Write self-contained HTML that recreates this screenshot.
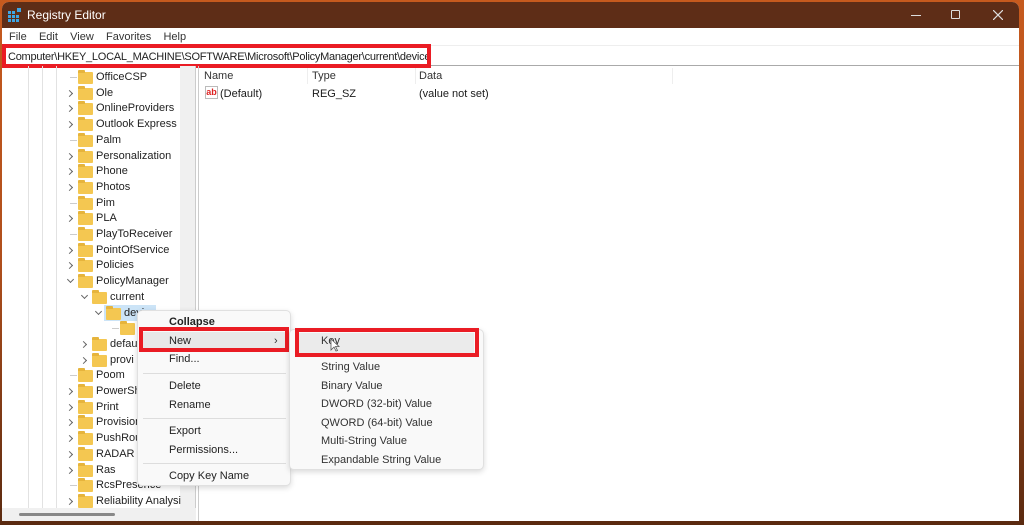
<!DOCTYPE html>
<html><head><meta charset="utf-8"><style>
*{margin:0;padding:0;box-sizing:border-box}
body{width:1024px;height:525px;overflow:hidden;position:relative;background:linear-gradient(180deg,#c65a1e 0%,#b04f1c 50%,#5a2a10 100%);font-family:"Liberation Sans",sans-serif;font-size:11px;color:#1a1a1a}
.a{position:absolute;white-space:nowrap}
#win{position:absolute;left:2px;top:2px;width:1017px;height:519px;background:#fff;border-radius:7px 7px 0 0;overflow:hidden}
.fold{position:absolute;width:15px;height:12px;background:#f4c751;border-radius:1px}
.fold:before{content:"";position:absolute;left:0;top:-2px;width:7px;height:3px;background:#e6b43c;border-radius:1px 1px 0 0}
.chev{position:absolute;width:5px;height:5px;border-right:1px solid #666;border-bottom:1px solid #666;transform:rotate(-45deg)}
.chev.d{transform:rotate(45deg)}
.t{position:absolute;color:#222;font-size:11px}
.mi{position:absolute;left:31px;font-size:11px;color:#222}
.si{position:absolute;left:31px;font-size:11px;color:#333}
</style></head><body>
<div id="win">
 <div class="a" style="left:0;top:0;width:1017px;height:26px;background:#5e2d17"></div>
 <svg class="a" style="left:6px;top:5px" width="15" height="15"><rect x="0" y="4" width="3" height="3" fill="#3ea6e6"/><rect x="4" y="4" width="3" height="3" fill="#3ea6e6"/><rect x="0" y="8" width="3" height="3" fill="#3ea6e6"/><rect x="4" y="8" width="3" height="3" fill="#3ea6e6"/><rect x="8" y="8" width="3" height="3" fill="#3ea6e6"/><rect x="0" y="12" width="3" height="3" fill="#3ea6e6"/><rect x="4" y="12" width="3" height="3" fill="#3ea6e6"/><rect x="8" y="12" width="3" height="3" fill="#3ea6e6"/><rect x="9" y="1" width="4" height="4" fill="#3ea6e6"/></svg>
 <div class="a" style="left:25px;top:6px;color:#fff;font-size:12px">Registry Editor</div>
 <div class="a" style="left:909px;top:13px;width:10px;height:1px;background:#ddd"></div>
 <div class="a" style="left:949px;top:8px;width:9px;height:9px;border:1px solid #ddd;border-radius:1px"></div>
 <svg class="a" style="left:991px;top:8px" width="10" height="10"><path d="M0 0L10 10M10 0L0 10" stroke="#ddd" stroke-width="1.2"/></svg>
 <div class="a" style="left:0;top:26px;width:1017px;height:18px;background:#fff"></div>
 <div class="a" style="left:7px;top:29px;color:#333;font-size:11px">File&nbsp;&nbsp;&nbsp; Edit&nbsp;&nbsp;&nbsp; View&nbsp;&nbsp;&nbsp; Favorites&nbsp;&nbsp;&nbsp; Help</div>
 <div class="a" style="left:0;top:43px;width:1017px;height:1px;background:#eee"></div>
 <div class="a" style="left:0;top:63px;width:1017px;height:1px;background:#aaa"></div>
 <div class="a" style="left:6px;top:49px;font-size:11px;color:#222;letter-spacing:-0.25px">Computer\HKEY_LOCAL_MACHINE\SOFTWARE\Microsoft\PolicyManager\current\device</div>
 <div class="a" style="left:0;top:42px;width:429px;height:24px;border:4px solid #ea1c24"></div>
 <div class="a" style="left:178px;top:64px;width:15px;height:442px;background:#f0f0f0"></div>
 <div class="a" style="left:193px;top:64px;width:1px;height:455px;background:#ccc"></div>
 <div class="a" style="left:196px;top:64px;width:1px;height:455px;background:#ccc"></div>
 <div class="a" style="left:0;top:506px;width:194px;height:13px;background:#f0f0f0"></div>
 <div class="a" style="left:17px;top:511px;width:96px;height:3px;background:#888;border-radius:2px"></div>
 <div class="a" style="left:26px;top:64px;width:1px;height:442px;background:#e2e2e2"></div>
 <div class="a" style="left:40px;top:64px;width:1px;height:442px;background:#e2e2e2"></div>
 <div class="a" style="left:54px;top:64px;width:1px;height:442px;background:#e2e2e2"></div>
 <div id="tree"></div>
 <div class="a" style="left:305px;top:66px;width:1px;height:16px;background:#eee"></div>
 <div class="a" style="left:413px;top:66px;width:1px;height:16px;background:#eee"></div>
 <div class="a" style="left:670px;top:66px;width:1px;height:16px;background:#eee"></div>
 <div class="a" style="left:202px;top:68px;color:#333">Name</div>
 <div class="a" style="left:310px;top:68px;color:#333">Type</div>
 <div class="a" style="left:417px;top:68px;color:#333">Data</div>
 <div class="a" style="left:203px;top:84px;width:13px;height:13px;border:1px solid #bbb;background:#fff;color:#d22;font-size:9px;font-weight:bold;line-height:10px;text-align:center">ab</div>
 <div class="a" style="left:218px;top:86px">(Default)</div>
 <div class="a" style="left:310px;top:86px">REG_SZ</div>
 <div class="a" style="left:417px;top:86px">(value not set)</div>
</div>
<div class="a" style="left:137px;top:310px;width:154px;height:176px;background:#f9f9f9;border:1px solid #e0e0e0;border-radius:5px;box-shadow:0 2px 6px rgba(0,0,0,.15)">
 <div class="mi" style="top:5px;font-weight:bold">Collapse</div>
 <div class="a" style="left:4px;top:21px;width:145px;height:19px;background:#e8e8e8"></div>
 <div class="mi" style="top:24px">New</div>
 <div class="a" style="left:136px;top:24px;color:#333">&#8250;</div>
 <div class="mi" style="top:42px">Find...</div>
 <div class="a" style="left:5px;top:62px;width:143px;height:1px;background:#ddd"></div>
 <div class="mi" style="top:69px">Delete</div>
 <div class="mi" style="top:88px">Rename</div>
 <div class="a" style="left:5px;top:107px;width:143px;height:1px;background:#ddd"></div>
 <div class="mi" style="top:114px">Export</div>
 <div class="mi" style="top:133px">Permissions...</div>
 <div class="a" style="left:5px;top:152px;width:143px;height:1px;background:#ddd"></div>
 <div class="mi" style="top:159px">Copy Key Name</div>
</div>
<div class="a" style="left:139px;top:327px;width:150px;height:25px;border:4px solid #ea1c24"></div>
<div class="a" style="left:289px;top:329px;width:195px;height:141px;background:#f9f9f9;border:1px solid #e0e0e0;border-radius:5px;box-shadow:0 2px 6px rgba(0,0,0,.15)">
 <div class="a" style="left:8px;top:3px;width:176px;height:21px;background:#ebebeb"></div>
 <div class="si" style="top:5px">Key</div>
 <div class="si" style="top:31px">String Value</div>
 <div class="si" style="top:50px">Binary Value</div>
 <div class="si" style="top:68px">DWORD (32-bit) Value</div>
 <div class="si" style="top:87px">QWORD (64-bit) Value</div>
 <div class="si" style="top:105px">Multi-String Value</div>
 <div class="si" style="top:124px">Expandable String Value</div>
</div>
<div class="a" style="left:295px;top:328px;width:184px;height:29px;border:4px solid #ea1c24"></div>
<svg class="a" style="left:330px;top:338px" width="10" height="14"><path d="M1 1L1 12L4 9L6 13L7.5 12.5L5.5 8.5L9 8.5Z" fill="#fff" stroke="#555" stroke-width="0.8"/></svg>
<script>
var rows=[["OfficeCSP",0,0],["Ole",0,1],["OnlineProviders",0,1],["Outlook Express",0,1],["Palm",0,0],["Personalization",0,1],["Phone",0,1],["Photos",0,1],["Pim",0,0],["PLA",0,1],["PlayToReceiver",0,0],["PointOfService",0,1],["Policies",0,1],["PolicyManager",0,2],["current",1,2],["device",2,2],["",3,0],["defau",1,1],["provi",1,1],["Poom",0,0],["PowerSh",0,1],["Print",0,1],["Provision",0,1],["PushRou",0,1],["RADAR",0,1],["Ras",0,1],["RcsPresence",0,0],["Reliability Analysi",0,1]];
var h="";rows.forEach(function(r,i){var y=68+i*15.7;var x=76+r[1]*14;
if(r[0]=="device")h+='<div class="a" style="left:102px;top:'+(y-1)+'px;width:52px;height:16px;background:#cce4f7"></div>';
if(r[2]==1)h+='<div class="chev" style="left:'+(x-11)+'px;top:'+(y+5)+'px"></div>';
else if(r[2]==2)h+='<div class="chev d" style="left:'+(x-10)+'px;top:'+(y+3)+'px"></div>';
else h+='<div class="a" style="left:'+(x-8)+'px;top:'+(y+7)+'px;width:7px;height:1px;background:#ccc"></div>';
h+='<div class="fold" style="left:'+x+'px;top:'+(y+2)+'px"></div>';
h+='<div class="t" style="left:'+(x+18)+'px;top:'+(y+1)+'px">'+r[0]+'</div>';});
document.getElementById("tree").innerHTML=h;
</script>
</body></html>
